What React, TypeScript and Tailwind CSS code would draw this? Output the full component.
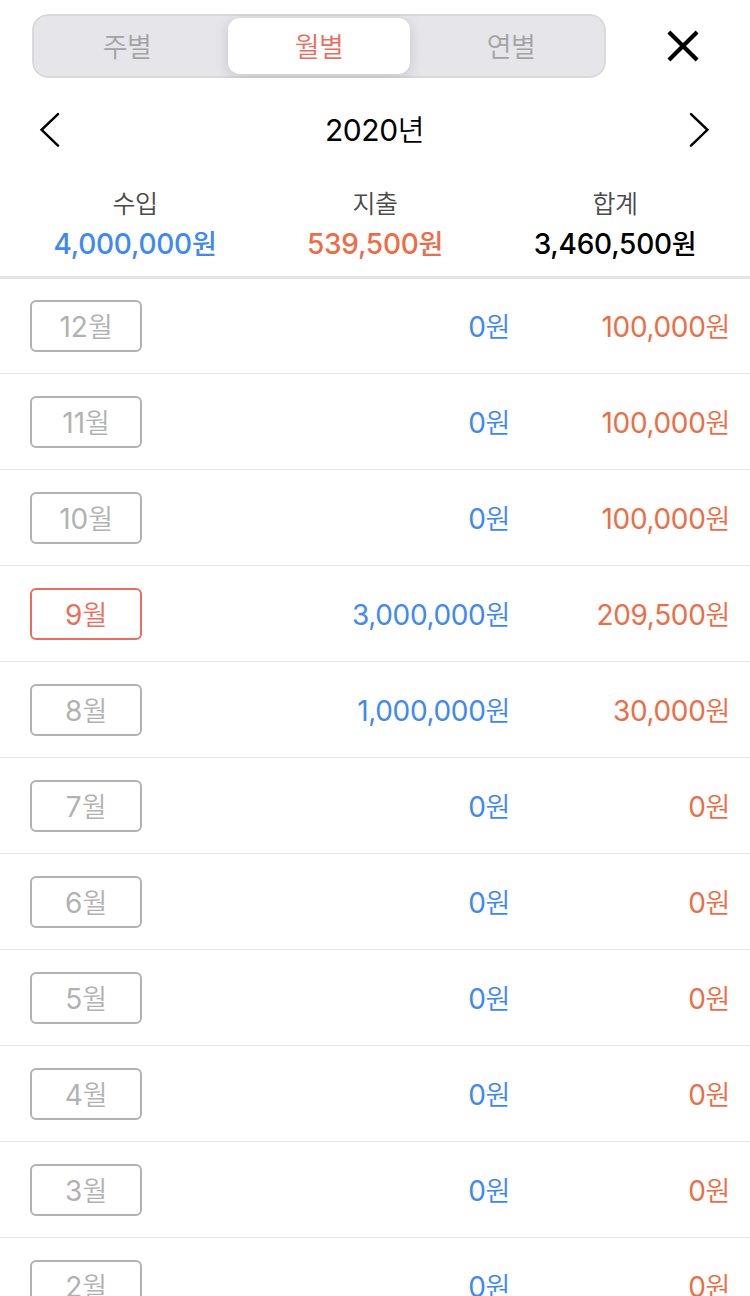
interface MonthRow {
  month: number
  income: number
  expense: number
}

const CURRENT_MONTH = 9

const tabs = [
  { label: '주별', active: false },
  { label: '월별', active: true },
  { label: '연별', active: false },
]

const rows: MonthRow[] = [
  { month: 12, income: 0, expense: 100000 },
  { month: 11, income: 0, expense: 100000 },
  { month: 10, income: 0, expense: 100000 },
  { month: 9, income: 3000000, expense: 209500 },
  { month: 8, income: 1000000, expense: 30000 },
  { month: 7, income: 0, expense: 0 },
  { month: 6, income: 0, expense: 0 },
  { month: 5, income: 0, expense: 0 },
  { month: 4, income: 0, expense: 0 },
  { month: 3, income: 0, expense: 0 },
  { month: 2, income: 0, expense: 0 },
]

function Unit({ children, light = true }: { children: string; light?: boolean }) {
  return <span className={light ? 'text-[27px] font-[350] tracking-[-0.3px]' : 'text-[27px] tracking-[-0.3px]'}>{children}</span>
}

function Won({ value, light }: { value: number; light?: boolean }) {
  return (
    <>
      {value.toLocaleString('en-US')}
      <Unit light={light}>원</Unit>
    </>
  )
}

function Summary({ label, value, color }: { label: string; value: number; color: string }) {
  return (
    <div className="flex w-60 flex-col items-center">
      <div className="h-10 text-[25px] leading-10 font-[350] tracking-[-0.5px] text-[#4a4a4a]">{label}</div>
      <div className={`h-10 text-[28px] leading-[41px] font-medium tracking-[-0.25px] ${color}`}>
        <Won value={value} light={false} />
      </div>
    </div>
  )
}

export default function App() {
  return (
    <div className="h-[1296px] w-[750px] overflow-hidden bg-white font-['Inter','Noto_Sans_CJK_KR',sans-serif] text-black">
      <header className="flex h-[92px] pt-[14px] pl-8">
        <div className="flex h-16 w-[574px] rounded-2xl border-2 border-[#d9d9d9] bg-[#e6e5ea] py-0.5 [clip-path:inset(0_round_16px)]">
          {tabs.map((tab) => (
            <button
              key={tab.label}
              className={
                tab.active
                  ? 'mx-1 h-14 w-[182px] rounded-xl bg-white text-[27px] leading-[56px] font-[350] tracking-[-0.5px] text-[#ed6d5c] shadow-[0_3px_14px_rgba(0,0,0,0.14)] pt-0.5'
                  : 'h-14 w-[190px] pt-0.5 text-[27px] leading-[56px] font-[350] tracking-[-0.5px] text-[#a3a3a3] first:pr-1 last:pl-1'
              }
            >
              {tab.label}
            </button>
          ))}
        </div>
        <svg className="mt-4 ml-[61px] h-8 w-8" viewBox="0 0 32 32" fill="none" stroke="currentColor" strokeWidth="4.2">
          <path d="M1.9 1.9 30.1 30.1M30.1 1.9 1.9 30.1" />
        </svg>
      </header>

      <nav className="flex h-[92px] items-start justify-between pt-5 pr-10 pl-[39px]">
        <svg className="h-9 w-[22px]" viewBox="0 0 22 36" fill="none" stroke="currentColor" strokeWidth="2.5" strokeLinecap="round">
          <path d="M19 2.2 2.6 17.8 19 33.6" />
        </svg>
        <h1 className="h-9 text-[30px] leading-9 tracking-[-0.4px]">
          2020<span className="text-[29px] font-[350]">년</span>
        </h1>
        <svg className="h-9 w-[22px]" viewBox="0 0 22 36" fill="none" stroke="currentColor" strokeWidth="2.5" strokeLinecap="round">
          <path d="M3 2.2 19.4 17.8 3 33.6" />
        </svg>
      </nav>

      <section className="flex h-[95px] justify-center border-b-3 border-[#e4e4e4]">
        <Summary label="수입" value={4000000} color="text-[#4088f4]" />
        <Summary label="지출" value={539500} color="text-[#ed6d47]" />
        <Summary label="합계" value={3460500} color="text-black" />
      </section>

      <ul>
        {rows.map((row) => (
          <li
            key={row.month}
            className="flex h-24 items-start border-b border-[#e4e4e4] pt-[22px] pl-[30px] text-[28px] leading-[54px] tracking-[-0.35px] first:h-[95px] first:pt-[21px]"
          >
            <div
              className={`h-[52px] w-28 rounded-md border-2 text-center leading-[50px] tracking-normal ${
                row.month === CURRENT_MONTH ? 'border-[#ed6d5c] text-[#ed6d5c]' : 'border-[#b2b2b2] text-[#b2b2b2]'
              }`}
            >
              {row.month}
              <Unit>월</Unit>
            </div>
            <div className="w-[368px] text-right text-[#4088f4]">
              <Won value={row.income} />
            </div>
            <div className="w-[220px] text-right text-[#ed6d47]">
              <Won value={row.expense} />
            </div>
          </li>
        ))}
      </ul>
    </div>
  )
}
